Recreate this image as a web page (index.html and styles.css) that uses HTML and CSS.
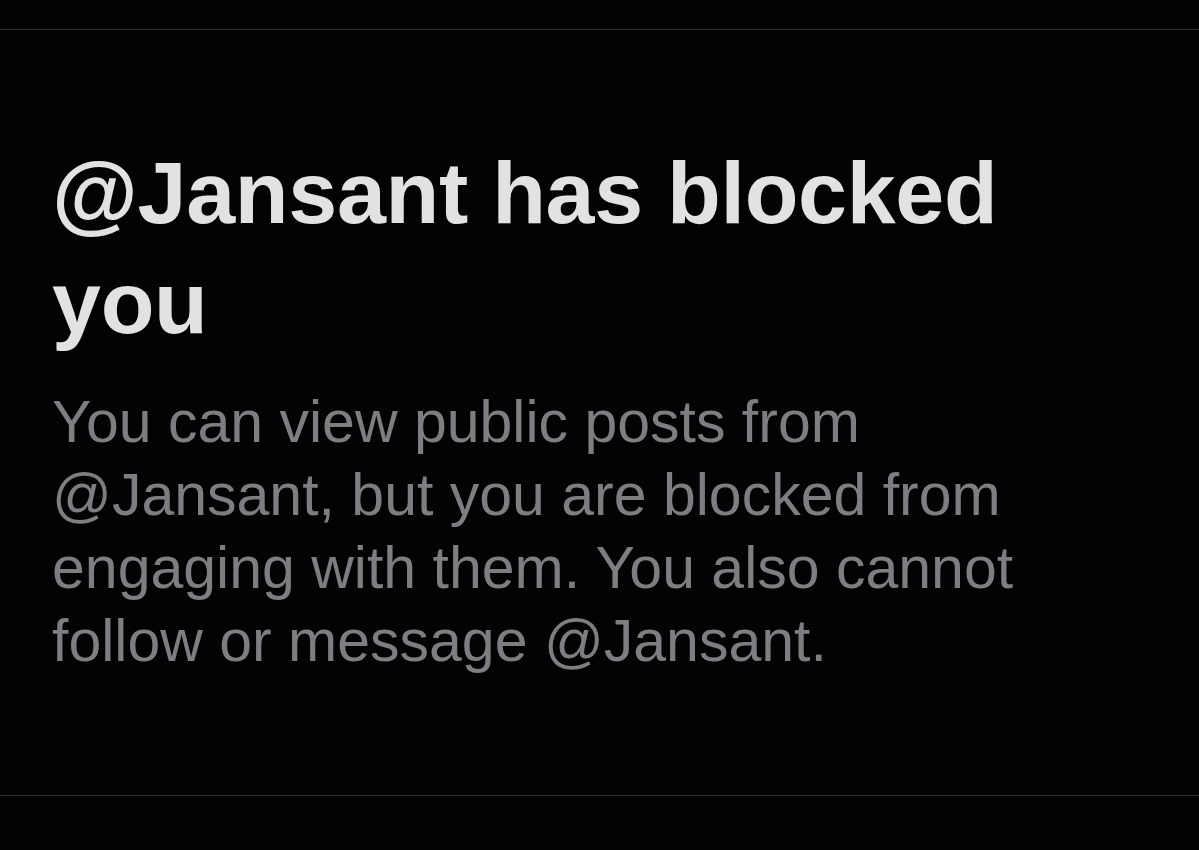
FILE: index.html
```html
<!DOCTYPE html>
<html lang="en">
<head>
<meta charset="utf-8">
<title>@Jansant has blocked you</title>
<link rel="stylesheet" href="styles.css">
</head>
<body>
<div class="page">
  <section class="blocked">
    <h1 class="blocked-title">@Jansant has blocked you</h1>
    <p class="blocked-text">You can view public posts from @Jansant, but you are blocked from engaging with them. You also cannot follow or message @Jansant.</p>
  </section>
</div>
</body>
</html>
```

FILE: styles.css
```css
html, body {
  margin: 0;
  padding: 0;
  background: #030303;
}

body {
  font-family: "Liberation Sans", Arial, sans-serif;
  width: 1199px;
  height: 850px;
  overflow: hidden;
}

.page {
  padding-top: 29px;
}

.blocked {
  border-top: 1px solid #2f3336;
  border-bottom: 1px solid #2f3336;
  padding: 108px 0 117px 52px;
}

.blocked-title {
  margin: 0 0 28px 0;
  width: 1060px;
  font-size: 88px;
  line-height: 110px;
  font-weight: 700;
  color: #e2e2e2;
  letter-spacing: -0.3px;
}

.blocked-text {
  margin: 0;
  width: 1060px;
  font-size: 59px;
  line-height: 73px;
  font-weight: 400;
  color: #7c7e82;
}
```
